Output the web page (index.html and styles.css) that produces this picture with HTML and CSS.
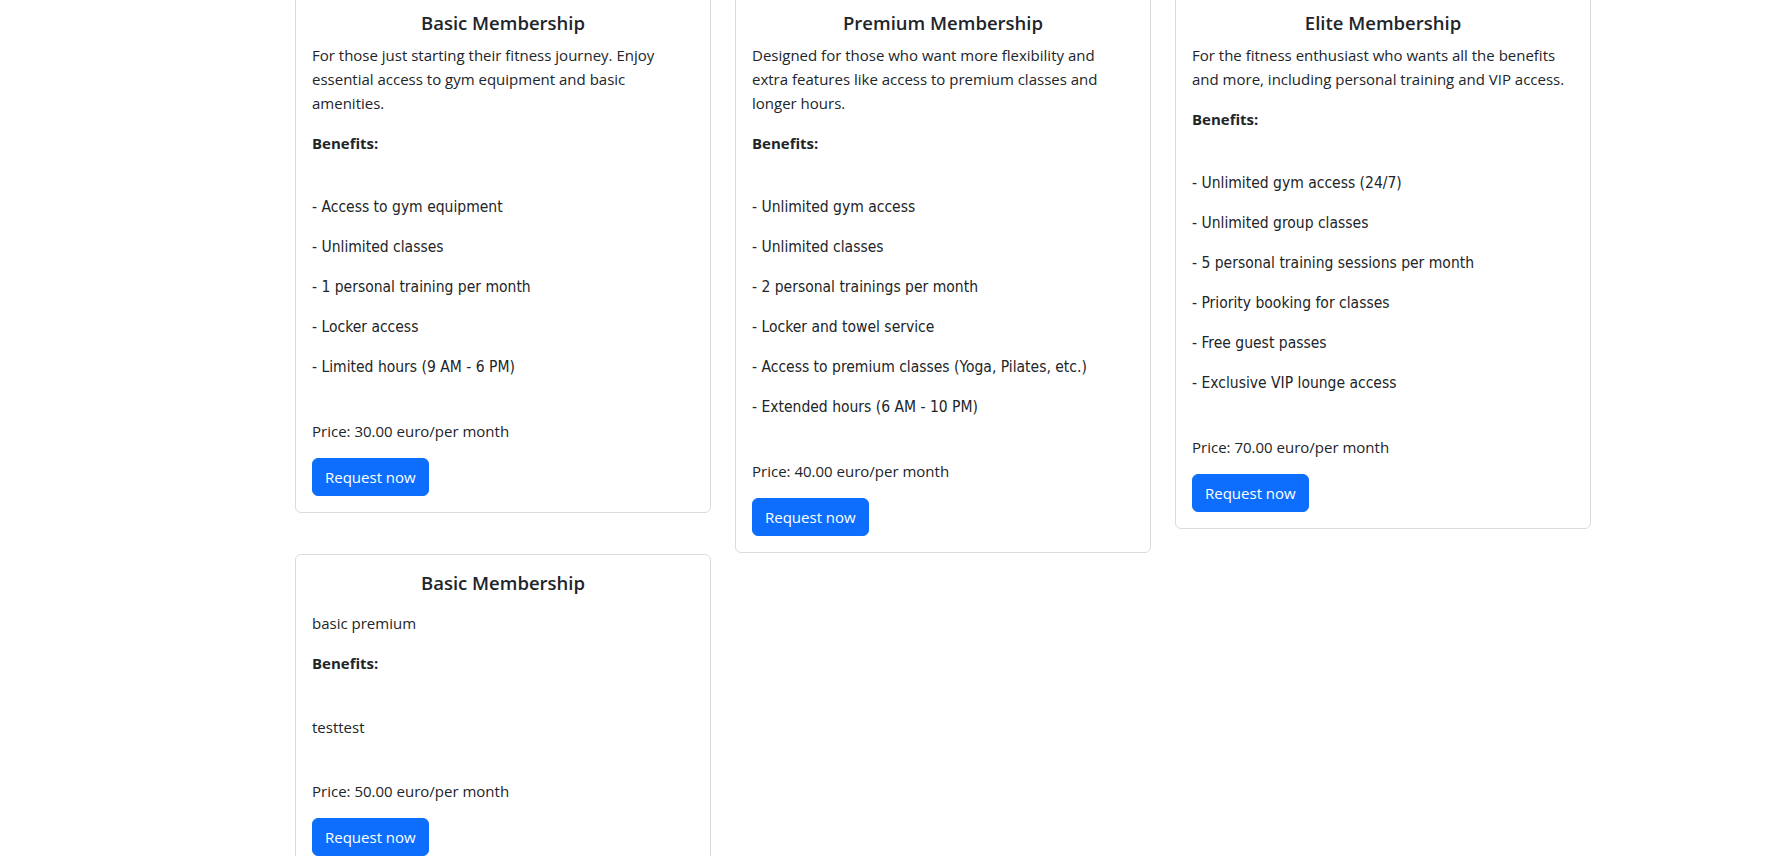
FILE: index.html
```html
<!DOCTYPE html>
<html lang="en">
<head>
<meta charset="utf-8">
<title>Memberships</title>
<link rel="stylesheet" href="styles.css">
</head>
<body>
<main class="page">
  <div class="plans">
    <div class="card">
      <h5 class="card-title">Basic Membership</h5>
      <p class="desc">For those just starting their fitness journey. Enjoy essential access to gym equipment and basic amenities.</p>
      <p class="benefits-label">Benefits:</p>
      <div class="benefits">
        <p>- Access to gym equipment</p>
        <p>- Unlimited classes</p>
        <p>- 1 personal training per month</p>
        <p>- Locker access</p>
        <p>- Limited hours (9 AM - 6 PM)</p>
      </div>
      <p class="price">Price: 30.00 euro/per month</p>
      <button class="btn">Request now</button>
    </div>
    <div class="card">
      <h5 class="card-title">Premium Membership</h5>
      <p class="desc">Designed for those who want more flexibility and extra features like access to premium classes and longer hours.</p>
      <p class="benefits-label">Benefits:</p>
      <div class="benefits">
        <p>- Unlimited gym access</p>
        <p>- Unlimited classes</p>
        <p>- 2 personal trainings per month</p>
        <p>- Locker and towel service</p>
        <p>- Access to premium classes (Yoga, Pilates, etc.)</p>
        <p>- Extended hours (6 AM - 10 PM)</p>
      </div>
      <p class="price">Price: 40.00 euro/per month</p>
      <button class="btn">Request now</button>
    </div>
    <div class="card">
      <h5 class="card-title">Elite Membership</h5>
      <p class="desc">For the fitness enthusiast who wants all the benefits and more, including personal training and VIP access.</p>
      <p class="benefits-label">Benefits:</p>
      <div class="benefits">
        <p>- Unlimited gym access (24/7)</p>
        <p>- Unlimited group classes</p>
        <p>- 5 personal training sessions per month</p>
        <p>- Priority booking for classes</p>
        <p>- Free guest passes</p>
        <p>- Exclusive VIP lounge access</p>
      </div>
      <p class="price">Price: 70.00 euro/per month</p>
      <button class="btn">Request now</button>
    </div>
    <div class="card">
      <h5 class="card-title">Basic Membership</h5>
      <div class="desc-wrap"><p class="desc">basic premium</p></div>
      <p class="benefits-label">Benefits:</p>
      <div class="benefits">
        <p class="plain">testtest</p>
      </div>
      <p class="price">Price: 50.00 euro/per month</p>
      <button class="btn">Request now</button>
    </div>
  </div>
</main>
</body>
</html>
```

FILE: styles.css
```css
* { box-sizing: border-box; }

html, body {
  margin: 0;
  padding: 0;
  background: #fff;
}

body {
  font-family: "Open Sans", "Noto Sans", sans-serif;
  font-size: 15px;
  line-height: 24px;
  color: #212529;
}

.page {
  width: 1320px;
  margin-left: 295px;
  margin-top: -6px;
}

.plans {
  display: grid;
  grid-template-columns: repeat(3, 416px);
  column-gap: 24px;
  row-gap: 1px;
  align-items: start;
}

.card {
  border: 1px solid #dcdcdc;
  border-radius: 6px;
  padding: 16px;
  background: #fff;
}

.card-title {
  margin: 0 0 8px;
  font-size: 18.5px;
  font-weight: 600;
  line-height: 24px;
  text-align: center;
}

.desc {
  margin: 0 0 16px;
}

.desc-wrap {
  padding-top: 8px;
}

.benefits-label {
  margin: 0 0 16px;
  font-weight: 700;
}

.benefits {
  padding: 24px 0;
  margin-bottom: 0;
}

.benefits p {
  margin: 0 0 16px;
  font-family: "DejaVu Sans Condensed", "DejaVu Sans", sans-serif;
  font-size: 15.5px;
}

.benefits p.plain {
  font-family: "Open Sans", "Noto Sans", sans-serif;
  font-size: 15px;
}

.price {
  margin: 0 0 15px;
}

.btn {
  display: inline-block;
  height: 38px;
  padding: 0 12px;
  border: 1px solid #0d6efd;
  border-radius: 6px;
  background: #0d6efd;
  color: #fff;
  font-family: "Open Sans", "Noto Sans", sans-serif;
  font-size: 15px;
  line-height: 36px;
  cursor: pointer;
}
```
